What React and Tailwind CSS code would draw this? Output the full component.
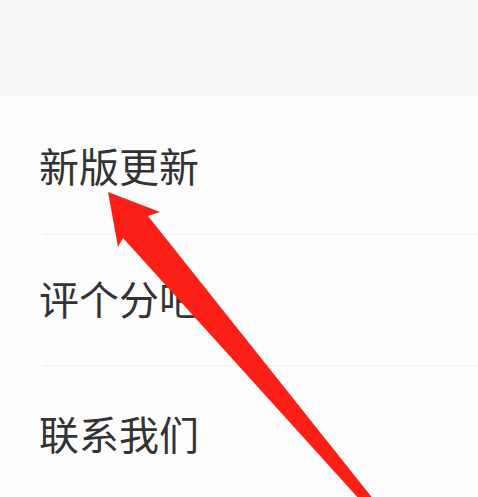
import React from "react";

const items = ["新版更新", "评个分吧", "联系我们"];

export default function App() {
  return (
    <div
      className="relative w-[478px] h-[497px] overflow-hidden bg-[#fdfdfd]"
      style={{ fontFamily: '"Noto Sans CJK SC", "Noto Sans", sans-serif' }}
    >
      <div className="h-[96px] bg-[#f7f7f7]" />
      <div className="flex flex-col">
        <div className="h-[137px] flex items-center pl-[39px] text-[40px] leading-none text-[#333333]">
          {items[0]}
        </div>
        <div className="ml-[42px] h-[2px] bg-[#f4f4f4]" />
        <div className="h-[130px] flex items-center pl-[39px] pb-[4px] text-[40px] leading-none text-[#333333]">
          {items[1]}
        </div>
        <div className="ml-[42px] h-[2px] bg-[#f4f4f4]" />
        <div className="h-[132px] flex items-center pl-[39px] text-[40px] leading-none text-[#333333]">
          {items[2]}
        </div>
      </div>
      <svg
        className="absolute inset-0 pointer-events-none"
        width="478"
        height="497"
        viewBox="0 0 478 497"
      >
        <polygon
          points="108,192 160,212 148,216 374,500 360,500 123,238 118,247"
          fill="#fb1f17"
        />
      </svg>
    </div>
  );
}
